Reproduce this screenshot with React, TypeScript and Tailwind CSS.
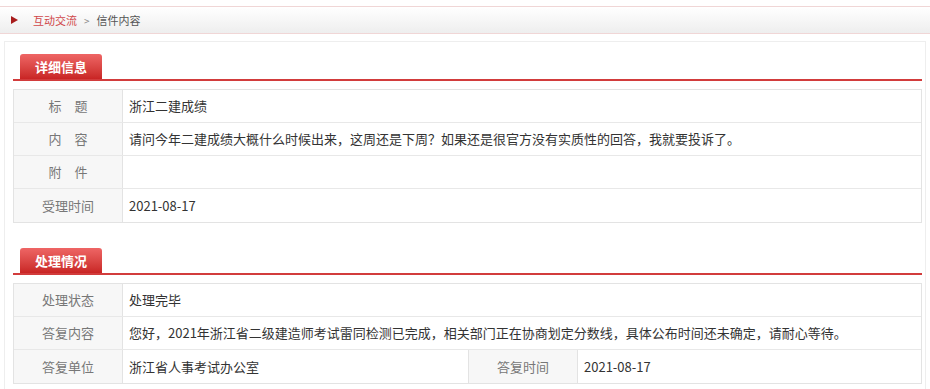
const FONT = 'font-["Microsoft_YaHei","Noto_Sans_CJK_SC",sans-serif]';

type Row = { label: string; value: string };

const SectionTab = ({ title }: { title: string }) => (
  <div className="border-b-2 border-[#d23c3c] pl-[7px]">
    <div className="w-[82px] h-[25px] rounded-t-[3px] bg-gradient-to-b from-[#ee6565] to-[#c92424] flex items-center justify-center text-white text-[13px] font-bold">
      {title}
    </div>
  </div>
);

const InfoRow = ({ label, value, last }: Row & { last?: boolean }) => (
  <div className={`flex h-[33px] ${last ? "" : "border-b border-[#e8e8e8]"}`}>
    <div className="w-[109px] shrink-0 bg-[#f7f7f7] border-r border-[#e3e3e3] flex items-center justify-center text-[#777]">
      {label}
    </div>
    <div className="flex-1 pl-[6px] flex items-center text-[#333]">{value}</div>
  </div>
);

const detail: Row[] = [
  { label: "标　题", value: "浙江二建成绩" },
  {
    label: "内　容",
    value:
      "请问今年二建成绩大概什么时候出来，这周还是下周？如果还是很官方没有实质性的回答，我就要投诉了。",
  },
  { label: "附　件", value: "" },
  { label: "受理时间", value: "2021-08-17" },
];

export default function App() {
  return (
    <div className={`w-[930px] h-[389px] overflow-hidden bg-white text-[13px] ${FONT}`}>
      <div className="pt-[6px]">
        <div className="h-[28px] border-t border-[#f0d6d6] border-b border-[#c9c9c9] bg-gradient-to-b from-white to-[#eeeeee] flex items-center pl-[11px] text-[11px]">
          <span className="w-0 h-0 border-y-[4px] border-y-transparent border-l-[7px] border-l-[#a81c1c]" />
          <span className="ml-[15px] text-[#d0474a]">互动交流</span>
          <span className="mx-[7px] text-[#888] text-[10px]">&gt;</span>
          <span className="text-[#555]">信件内容</span>
        </div>
      </div>

      <div className="mt-[7px] ml-[4px] w-[922px] h-[400px] border-l border-t border-r border-[#eeeeee] pl-[8px] pr-[3px] pt-[12px]">
        <SectionTab title="详细信息" />
        <div className="mt-[8px] border border-[#e3e3e3]">
          {detail.map((r, i) => (
            <InfoRow key={r.label} {...r} last={i === detail.length - 1} />
          ))}
        </div>

        <div className="mt-[25px]">
          <SectionTab title="处理情况" />
        </div>
        <div className="mt-[8px] border border-[#e3e3e3]">
          <InfoRow label="处理状态" value="处理完毕" />
          <InfoRow
            label="答复内容"
            value="您好，2021年浙江省二级建造师考试雷同检测已完成，相关部门正在协商划定分数线，具体公布时间还未确定，请耐心等待。"
          />
          <div className="flex h-[33px]">
            <div className="w-[109px] shrink-0 bg-[#f7f7f7] border-r border-[#e3e3e3] flex items-center justify-center text-[#777]">
              答复单位
            </div>
            <div className="w-[346px] pl-[6px] flex items-center text-[#333] border-r border-[#e3e3e3]">
              浙江省人事考试办公室
            </div>
            <div className="w-[109px] shrink-0 bg-[#f7f7f7] border-r border-[#e3e3e3] flex items-center justify-center text-[#777]">
              答复时间
            </div>
            <div className="flex-1 pl-[6px] flex items-center text-[#333]">2021-08-17</div>
          </div>
        </div>
      </div>
    </div>
  );
}
